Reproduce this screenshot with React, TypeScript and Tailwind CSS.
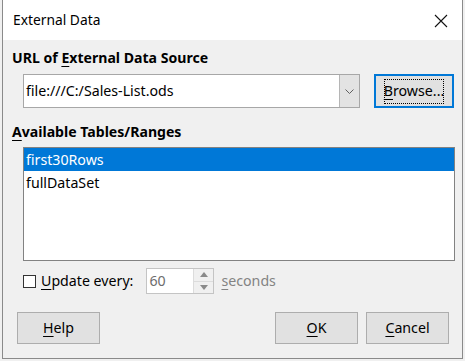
import React from "react";

function U({ children }: { children: React.ReactNode }) {
  return <span className="underline decoration-1 underline-offset-[3px]">{children}</span>;
}

export default function App() {
  return (
    <div className="w-[465px] h-[361px] bg-[#f0f0f0] px-[2px] pb-[2px] font-['Noto_Sans',sans-serif] text-[14.2px] text-black leading-[20px]">
      <div className="w-[461px] h-[359px] border-x border-b border-[#8a8a8a] flex flex-col">
        {/* Title bar */}
        <div className="h-[40px] bg-white flex items-center justify-between pl-[10px] pr-[14px] shrink-0">
          <span className="text-[13.8px]">External Data</span>
          <svg width="14" height="14" viewBox="0 0 14 14" className="mt-[2px]">
            <path d="M1 1 L13 13 M13 1 L1 13" stroke="#111" strokeWidth="1.1" />
          </svg>
        </div>
        {/* Body */}
        <div className="flex-1 flex flex-col bg-[#f0f0f0]">
          <div className="mt-[8px] pl-[9px] h-[20px] font-bold text-[14.1px]">
            URL of <U>E</U>xternal Data Source
          </div>
          <div className="mt-[6px] pl-[20px] flex items-center">
            <div className="w-[337px] h-[34px] bg-white border border-[#a7a7a7] flex">
              <div className="flex-1 flex items-center pl-[2px]">file:///C:/Sales-List.ods</div>
              <div className="w-[20px] bg-[#e3e3e3] border-l border-[#b5b5b5] flex items-center justify-center">
                <svg width="9" height="5" viewBox="0 0 9 5">
                  <path d="M0.5 0.5 L4.5 4.5 L8.5 0.5" stroke="#606060" fill="none" strokeWidth="1" />
                </svg>
              </div>
            </div>
            <div className="ml-[14px] w-[80px] h-[34px] bg-[#e1e1e1] border-2 border-[#0078d7] flex items-center justify-center">
              <div className="w-[60px] h-[25px] border border-dotted border-black flex items-center justify-center">
                <span><U>B</U>rowse...</span>
              </div>
            </div>
          </div>
          <div className="mt-[14px] pl-[9px] h-[20px] font-bold text-[14.1px]">
            <U>A</U>vailable Tables/Ranges
          </div>
          <div className="mt-[5px] ml-[20px] w-[432px] h-[114px] bg-white border border-[#828282] flex flex-col">
            <div className="h-[23px] bg-[#0078d7] text-white flex items-center pl-[2px]">first30Rows</div>
            <div className="h-[23px] flex items-center pl-[2px]">fullDataSet</div>
          </div>
          <div className="mt-[7px] pl-[20px] h-[26px] flex items-center">
            <div className="w-[13px] h-[13px] border border-[#333] bg-white" />
            <span className="ml-[5px]"><U>U</U>pdate every:</span>
            <div className="ml-[13px] w-[68px] h-[26px] bg-white border border-[#c4c4c4] flex">
              <div className="flex-1 flex items-center pl-[2px] text-[#6d6d6d]">60</div>
              <div className="w-[20px] bg-[#f0f0f0] border-l border-[#dcdcdc] flex flex-col">
                <div className="flex-1 flex items-center justify-center border-b border-[#dcdcdc]">
                  <svg width="8" height="5" viewBox="0 0 8 5"><path d="M0 5 L4 0 L8 5 Z" fill="#8a8a8a" /></svg>
                </div>
                <div className="flex-1 flex items-center justify-center">
                  <svg width="8" height="5" viewBox="0 0 8 5"><path d="M0 0 L4 5 L8 0 Z" fill="#8a8a8a" /></svg>
                </div>
              </div>
            </div>
            <span className="ml-[7px] text-[#838383]"><U>s</U>econds</span>
          </div>
          <div className="mt-[18px] pl-[14px] pr-[13px] flex items-center">
            <div className="w-[83px] h-[32px] bg-[#e1e1e1] border border-[#adadad] flex items-center justify-center">
              <span><U>H</U>elp</span>
            </div>
            <div className="flex-1" />
            <div className="w-[83px] h-[32px] bg-[#e1e1e1] border border-[#adadad] flex items-center justify-center">
              <span><U>O</U>K</span>
            </div>
            <div className="ml-[8px] w-[83px] h-[32px] bg-[#e1e1e1] border border-[#adadad] flex items-center justify-center">
              <span><U>C</U>ancel</span>
            </div>
          </div>
        </div>
      </div>
    </div>
  );
}
